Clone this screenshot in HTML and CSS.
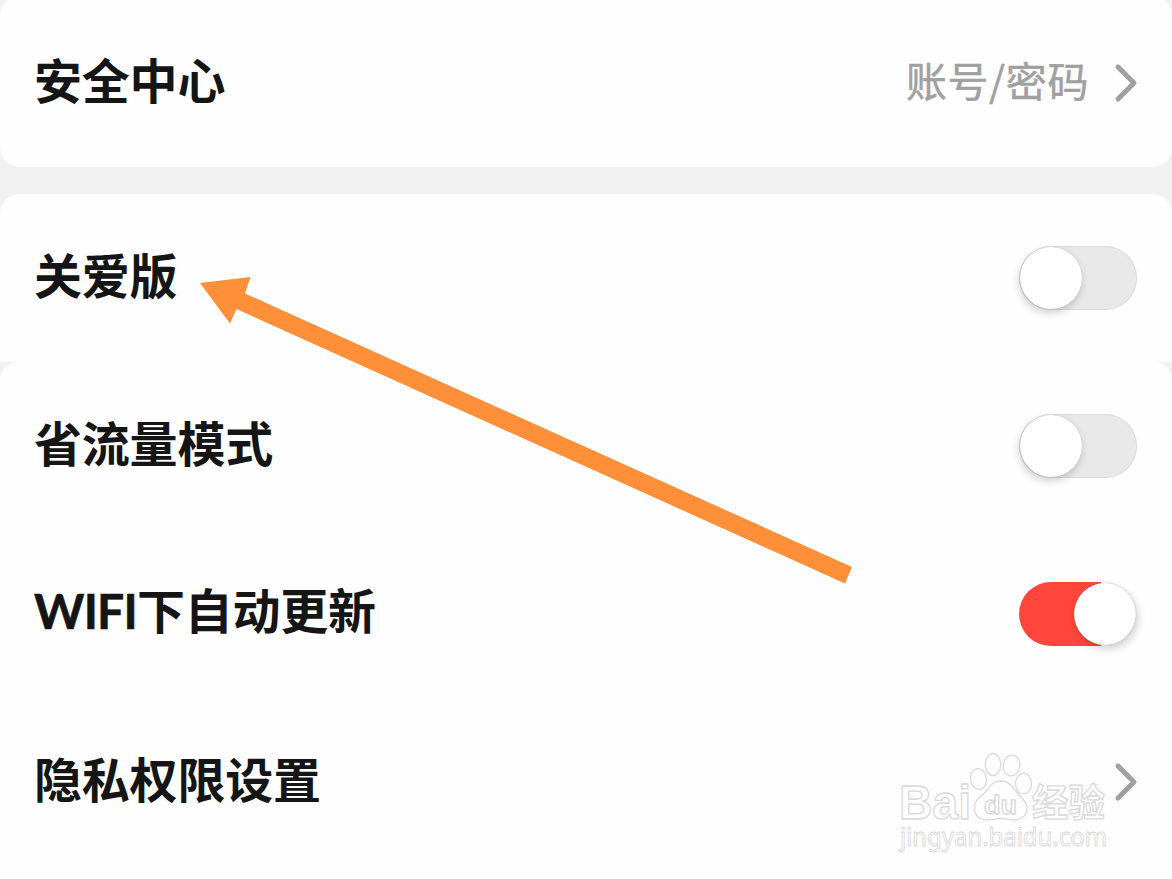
FILE: index.html
```html
<!DOCTYPE html>
<html lang="zh-CN">
<head>
<meta charset="utf-8">
<title>设置</title>
<link rel="stylesheet" href="styles.css">
</head>
<body>
<main class="page">
  <section class="card card-first">
    <div class="row"><span class="label">安全中心</span>
      <span class="extra"><span class="hint">账号/密码</span>
      <svg class="chevron" width="24" height="40" viewBox="0 0 24 40"><path d="M4 4 20 20 4 36"/></svg></span>
    </div>
  </section>
  <section class="card card-care">
    <div class="row"><span class="label">关爱版</span><span class="switch"><span class="knob"></span></span></div>
  </section>
  <section class="card card-rest">
    <div class="row"><span class="label">省流量模式</span><span class="switch"><span class="knob"></span></span></div>
    <div class="row"><span class="label"><span class="latin">WIFI</span>下自动更新</span><span class="switch on"><span class="knob"></span></span></div>
    <div class="row"><span class="label">隐私权限设置</span>
      <svg class="chevron" width="24" height="40" viewBox="0 0 24 40"><path d="M4 4 20 20 4 36"/></svg>
    </div>
  </section>
  <svg class="arrow" width="1172" height="879" viewBox="0 0 1172 879"><path d="M200 283 250.500 277 245 293.500 852 567 845 583.500 236.500 309 230 323.500Z"/></svg>
  <svg class="watermark" width="232" height="139" viewBox="880 740 232 139">
    <text class="brand" x="899" y="819" textLength="72" lengthAdjust="spacingAndGlyphs">Bai</text>
    <ellipse cx="978.500" cy="779" rx="8" ry="10.500" transform="rotate(-8 978.500 779)"/>
    <ellipse cx="993" cy="764.500" rx="7.700" ry="11"/>
    <ellipse cx="1011.500" cy="765.500" rx="8.300" ry="10.500" transform="rotate(8 1011.500 765.500)"/>
    <ellipse cx="1023.500" cy="783.500" rx="8" ry="10.300"/>
    <path d="M1000.500 781C991 781 990 788 985 792.500C979 798 974 801 974.500 808C975 816 980 820 988 820C993 820 996 818.500 1000.500 818.500C1005 818.500 1009 820 1014 820C1022 820 1027 815 1027 808C1026.500 800 1021 798 1017 792.500C1012 787 1010 781 1000.500 781Z"/>
    <text class="du" x="984" y="813.500" textLength="33" lengthAdjust="spacingAndGlyphs">du</text>
    <text class="cn" x="1032" y="815.500" textLength="73" lengthAdjust="spacingAndGlyphs">经验</text>
    <text class="url" x="900" y="846" textLength="207" lengthAdjust="spacingAndGlyphs">jingyan.baidu.com</text>
  </svg>
</main>
</body>
</html>
```
FILE: styles.css
```css
* { box-sizing: border-box; }
body { margin: 0; background: #f1f1f1; }
.page {
  position: relative;
  width: 1172px;
  height: 879px;
  overflow: hidden;
  font-family: "Noto Sans CJK SC", sans-serif;
}
.card { background: #fefefe; border-radius: 20px; }
.card-first { margin-top: -4px; height: 171px; padding-top: 3px; }
.card-care { margin-top: 27px; border-radius: 20px 20px 0 0; }
.card-rest { height: 540px; border-radius: 18px 18px 0 0; }
.row {
  display: flex;
  align-items: center;
  justify-content: space-between;
  height: 168px;
  padding: 0 34px 0 34px;
}
.label { font-size: 48px; line-height: 72px; font-weight: 700; color: #151515; letter-spacing: -0.2px; margin-top: -10px; }
.latin { font-family: Lato, sans-serif; letter-spacing: -0.8px; -webkit-text-stroke: 0.6px #151515; }
.extra { display: flex; align-items: center; gap: 25px; }
.hint { font-size: 41px; line-height: 60px; color: #a0a0a0; letter-spacing: 0.6px; -webkit-text-stroke: 0.5px #a0a0a0; margin-top: -8px; }
.chevron { fill: none; stroke: #a0a0a0; stroke-width: 5; stroke-linecap: round; stroke-linejoin: round; }
.switch {
  display: flex;
  width: 118px;
  height: 64px;
  margin-right: 1px;
  padding: 1px;
  border-radius: 32px;
  background: #e8e8e8;
  box-shadow: inset 0 0 0 1px #dcdcdc;
}
.knob {
  width: 62px;
  height: 62px;
  border-radius: 50%;
  background: #fff;
  box-shadow: -1px 4px 8px rgba(0, 0, 0, .18), 0 0 1px rgba(0, 0, 0, .2);
}
.on {
  justify-content: flex-end;
  background: linear-gradient(90deg, #ff463d 82px, transparent 82px);
  box-shadow: none;
}
.on .knob { box-shadow: 2px 4px 8px rgba(0, 0, 0, .18), 0 0 1px rgba(0, 0, 0, .4); }
.arrow { position: absolute; left: 0; top: 0; fill: #ff8f39; }
.watermark { position: absolute; left: 880px; top: 740px; fill: #fefefe; stroke: #d9d9d9; stroke-width: 1.3; }
.brand { font: 700 49px "Liberation Sans", sans-serif; }
.du { font: 700 25px "Liberation Sans", sans-serif; }
.cn { font: 700 38px "Noto Sans CJK SC", sans-serif; }
.url { font: 400 25px "Noto Sans", sans-serif; stroke-width: 0.9; }
```
